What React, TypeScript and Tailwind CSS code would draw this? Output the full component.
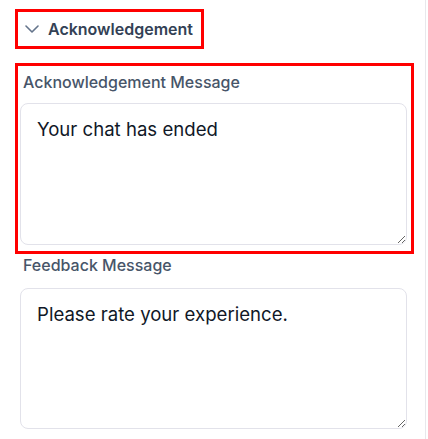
import React from "react";

export default function App() {
  const font = { fontFamily: "Inter, 'Noto Sans', sans-serif" };
  return (
    <div
      className="w-[426px] h-[439px] border-r border-[#e8e8ec] bg-white pl-[15px] pt-[9px] overflow-hidden"
      style={font}
    >
      <div className="w-[189px] h-[40px] border-[3px] border-[#ff0000] flex items-center pl-[7px]">
        <svg width="14" height="8" viewBox="0 0 14 8" fill="none" stroke="#64748b" strokeWidth="1.6" strokeLinecap="round" strokeLinejoin="round" className="shrink-0">
          <path d="M1 1l6 6 6-6" />
        </svg>
        <span className="ml-[9px] text-[16px] font-semibold text-[#334155] leading-6">Acknowledgement</span>
      </div>

      <div className="mt-[14px] w-[399px] h-[191px] border-[3px] border-[#ff0000] pl-[2px] pt-[4px]">
        <div className="ml-[3px] text-[16px] font-medium text-[#475569] leading-6">Acknowledgement Message</div>
        <textarea
          className="mt-[9px] block w-[387px] h-[142px] rounded-lg border border-[#e2e2ea] px-4 py-[11px] text-[18.6px] leading-7 text-[#111827] outline-none resize-y"
          style={font}
          defaultValue="Your chat has ended"
        />
      </div>

      <div className="pl-[5px]">
        <div className="ml-[3px] text-[16px] font-medium text-[#475569] leading-[22px]">Feedback Message</div>
        <textarea
          className="mt-[12px] block w-[387px] h-[141px] rounded-lg border border-[#e2e2ea] px-4 py-[11px] text-[18.6px] leading-7 text-[#111827] outline-none resize-y"
          style={font}
          defaultValue="Please rate your experience."
        />
      </div>
    </div>
  );
}
